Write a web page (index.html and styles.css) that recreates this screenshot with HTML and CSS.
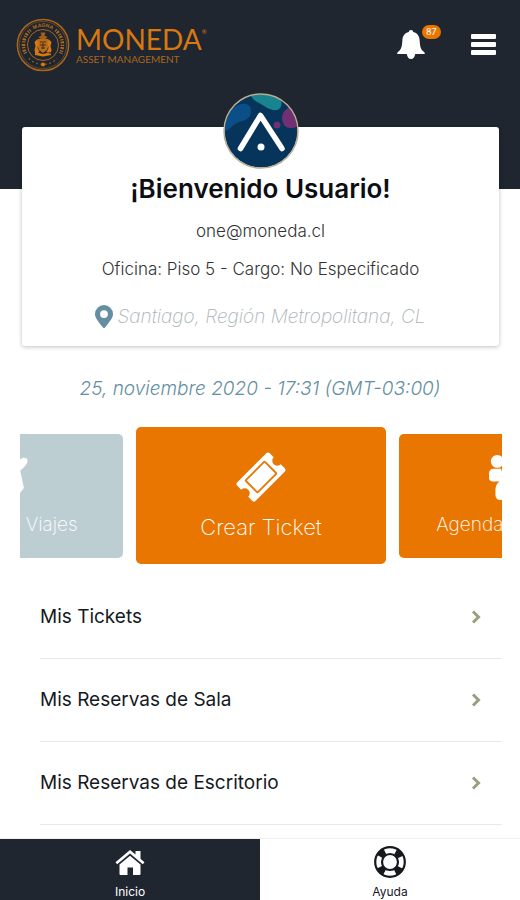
FILE: index.html
```html
<!DOCTYPE html>
<html lang="es">
<head>
<meta charset="utf-8">
<meta name="viewport" content="width=device-width, initial-scale=1">
<title>Moneda Asset Management</title>
<link rel="stylesheet" href="styles.css">
</head>
<body>
<div class="app">
  <header class="header">
    <div class="topbar">
      <a class="brand" href="#">
        <svg class="seal" viewBox="0 0 54 54" aria-hidden="true">
          <g fill="none" stroke="currentColor">
            <circle cx="27" cy="27" r="25.6" stroke-width="1.5"/>
            <circle cx="27" cy="27" r="23.6" stroke-width=".5"/>
            <circle cx="27" cy="27" r="15.500" stroke-width="1"/>
            <path d="M9.500 35.500A19.500 19.500 0 0 1 14.500 12" stroke-width="3.500" stroke-dasharray="1.200 1 2 1.400"/>
            <path d="M39.500 12A19.500 19.500 0 0 1 44.500 35.500" stroke-width="3.500" stroke-dasharray="1.200 1 2 1.400"/>
            <path d="M13 40.500A19.500 19.500 0 0 0 41 40.500" stroke-width="1.400" stroke-dasharray="1.400 3"/>
          </g>
          <path id="arc" d="M9 27A18 18 0 0 1 45 27" fill="none"/>
          <text class="seal-text"><textPath href="#arc" startOffset="50%" text-anchor="middle">MAGNA</textPath></text>
          <g fill="#d9780f">
            <path d="M24.500 14.500h5l-1 3 3 1.500-2 2h-5l-2-2 3-1.500z" opacity=".7"/>
            <path d="M22 21h10l1 5-2 6-4 3-4-3-2-6z" opacity=".85"/>
            <path d="M18.500 24l3-3 1 4-1 5 2 4-4 2-1-4 1-4zM35.500 24l-3-3-1 4 1 5-2 4 4 2 1-4-1-4zM19 34l8 2 8-2v3l-8 1.500L19 37z"/>
            <circle cx="27" cy="46.500" r="2"/>
          </g>
          <path d="M24 24h2M28 24h2M24 27h6M27 23v8M25 30h4" stroke="#1f262f" stroke-width=".8"/>
        </svg>
        <span class="brand-words">
          <span class="brand-name">MONEDA<sup class="mark">®</sup></span>
          <span class="brand-sub">ASSET MANAGEMENT</span>
        </span>
      </a>
      <div class="actions">
        <button class="icon-button bell" type="button" aria-label="Notificaciones">
          <svg viewBox="0 0 28 30" width="28" height="30" aria-hidden="true"><path fill="currentColor" d="M14 0c1.300 0 2.200.9 2.200 2.100C20.500 3 22.500 6.200 22.700 11c.3 6.200 1.500 9 4.100 10.800.8.600 1 1.200 1 2.200H18.200c-.4 3-2 5-4.200 5s-3.800-2-4.200-5H.2c0-1 .2-1.600 1-2.200C3.800 20 5 17.200 5.300 11 5.500 6.200 7.500 3 11.800 2.100 11.800.9 12.700 0 14 0z"/></svg>
          <span class="badge">87</span>
        </button>
        <button class="icon-button" type="button" aria-label="Menú">
          <svg viewBox="0 0 25 22" width="25" height="22" aria-hidden="true"><path fill="currentColor" d="M1 0h23a1 1 0 0 1 1 1v3a1 1 0 0 1-1 1H1a1 1 0 0 1-1-1V1a1 1 0 0 1 1-1zm0 8h23a1 1 0 0 1 1 1v3a1 1 0 0 1-1 1H1a1 1 0 0 1-1-1V9a1 1 0 0 1 1-1zm0 8h23a1 1 0 0 1 1 1v3a1 1 0 0 1-1 1H1a1 1 0 0 1-1-1v-3a1 1 0 0 1 1-1z"/></svg>
        </button>
      </div>
    </div>
  </header>

  <main>
    <section class="profile">
      <svg class="avatar" viewBox="0 0 76 76" role="img" aria-label="Avatar">
        <defs><clipPath id="disc"><circle cx="38" cy="38" r="36.500"/></clipPath></defs>
        <g clip-path="url(#disc)">
          <path fill="#06345a" d="M0 0h76v76H0z"/>
          <path fill="#0b4f88" d="M0 38C6 39 9 31 16 29S28 25 28 18 22 9 15 12L0 22z"/>
          <path fill="#178490" d="M27 0c2 8 8 9 14 13s13 6 16 2 1-8 0-15z"/>
          <path fill="#713074" d="M68 14c-6 2-9 6-9 11s3 10 8 10 9-2 9-2V14z"/>
          <circle cx="54" cy="32" r="3.500" fill="#713074"/>
        </g>
        <circle cx="38" cy="38" r="37" fill="none" stroke="#b9af93" stroke-width="1.500"/>
        <path d="M17.500 55.500L37.500 22.500l21.500 33" fill="none" stroke="#fff" stroke-width="5.500" stroke-linecap="round" stroke-linejoin="round"/>
        <circle cx="38" cy="54" r="3.500" fill="#fff"/>
      </svg>
      <h1 class="welcome">¡Bienvenido Usuario!</h1>
      <p class="detail">one@moneda.cl</p>
      <p class="detail">Oficina: Piso 5 - Cargo: No Especificado</p>
      <p class="location">
        <svg class="pin" viewBox="0 0 18 23" aria-hidden="true"><path fill="currentColor" fill-rule="evenodd" d="M9 0a9 9 0 0 1 9 9c0 3.500-2 6-8 13.500a1.300 1.300 0 0 1-2 0C2 15 0 12.500 0 9a9 9 0 0 1 9-9zm0 5.200a3.900 3.900 0 1 0 0 7.800 3.900 3.900 0 0 0 0-7.800z"/></svg>
        <span class="place">Santiago, Región Metropolitana, CL</span>
      </p>
    </section>

    <p class="date">25, noviembre 2020 - 17:31 (GMT-03:00)</p>

    <section class="carousel" aria-label="Accesos directos">
      <button class="slide muted" type="button">
        <svg class="slide-icon" viewBox="0 0 50 50" aria-hidden="true"><path fill="currentColor" d="M35 6c3-3 8-2 8 1 0 4-3 7-8 11l4 19-4 5-10-15-8 7 1 7-3 3-5-8-8-5 3-3 7 1 7-8L4 11l4-4 19 6z"/></svg>
        <span>Reservar Viajes</span>
      </button>
      <button class="slide active" type="button">
        <svg class="slide-icon" viewBox="0 0 50 50" aria-hidden="true">
          <g transform="rotate(-45 25 25)">
            <path fill="currentColor" d="M4.500 12h41a2.500 2.500 0 0 1 2.500 2.500V20a5 5 0 0 0 0 10v5.500a2.500 2.500 0 0 1-2.500 2.500h-41A2.500 2.500 0 0 1 2 35.500V30a5 5 0 0 0 0-10v-5.500A2.500 2.500 0 0 1 4.500 12z"/>
            <rect x="11.500" y="16.500" width="27" height="17" rx="1" fill="none" stroke="#e97600" stroke-width="1.800"/>
          </g>
        </svg>
        <span>Crear Ticket</span>
      </button>
      <button class="slide" type="button">
        <svg class="slide-icon" viewBox="0 0 50 50" aria-hidden="true"><g fill="currentColor"><circle cx="9" cy="8" r="7"/><circle cx="41" cy="8" r="7"/><circle cx="25" cy="16" r="9"/><path d="M5 16h8c1.500 5 3 8 6 10-3 3-6 4-9 4H5c-4 0-5-2-5-5v-4c0-3 2-5 5-5zM45 16h-8c-1.500 5-3 8-6 10 3 3 6 4 9 4h5c4 0 5-2 5-5v-4c0-3-2-5-5-5z"/><path d="M17 28h16c6 0 10 5 10 11v5c0 4-2 6-6 6H13c-4 0-6-2-6-6v-5c0-6 4-11 10-11z"/></g></svg>
        <span>Agendar Reunión</span>
      </button>
    </section>

    <ul class="list">
      <li><a href="#">Mis Tickets<svg class="chevron" viewBox="0 0 10 14" aria-hidden="true"><path d="M2 1.500L7.500 7 2 12.500"/></svg></a></li>
      <li><a href="#">Mis Reservas de Sala<svg class="chevron" viewBox="0 0 10 14" aria-hidden="true"><path d="M2 1.500L7.500 7 2 12.500"/></svg></a></li>
      <li><a href="#">Mis Reservas de Escritorio<svg class="chevron" viewBox="0 0 10 14" aria-hidden="true"><path d="M2 1.500L7.500 7 2 12.500"/></svg></a></li>
    </ul>
  </main>

  <nav class="tabs">
    <a class="tab current" href="#">
      <svg viewBox="0 0 32 32" aria-hidden="true"><path fill="currentColor" d="M16 4l5.500 4.600V5h5v7.800l4 3.500-1.700 2L16 7.600 3.200 18.300l-1.700-2zM16 9.800l10.500 8.700V28a1 1 0 0 1-1 1H19v-7.500h-5.500V29H6.500a1 1 0 0 1-1-1v-9.500z"/></svg>
      <span>Inicio</span>
    </a>
    <a class="tab" href="#">
      <svg viewBox="0 0 32 32" aria-hidden="true">
        <circle cx="16" cy="16" r="14.800" fill="none" stroke="currentColor" stroke-width="2.200"/>
        <circle cx="16" cy="16" r="8" fill="none" stroke="currentColor" stroke-width="2.200"/>
        <circle cx="16" cy="16" r="11.500" fill="none" stroke="currentColor" stroke-width="6" stroke-dasharray="7 11.060" stroke-dashoffset="-5.530"/>
      </svg>
      <span>Ayuda</span>
    </a>
  </nav>
</div>
</body>
</html>
```
FILE: styles.css
```css
* {
  box-sizing: border-box;
}

body {
  margin: 0;
  background: #fff;
  color: #15191e;
  font-family: Inter, "Liberation Sans", sans-serif;
}

button {
  border: 0;
  margin: 0;
  padding: 0;
  font: inherit;
  color: inherit;
  background: none;
}

a {
  color: inherit;
  text-decoration: none;
}

.app {
  min-height: 100vh;
  display: flex;
  flex-direction: column;
}

.header {
  padding: 18px 24px 117px 16px;
  background: #1f262f;
}

.topbar {
  display: flex;
  justify-content: space-between;
  align-items: center;
}

.brand {
  display: flex;
  align-items: center;
  gap: 6px;
  color: #d9780f;
}

.seal {
  width: 54px;
  height: 54px;
  color: #a8661f;
}

.seal-text {
  font-size: 5px;
  font-weight: 700;
  fill: currentColor;
}

.brand-words {
  display: flex;
  flex-direction: column;
  font-family: Lato, sans-serif;
}

.brand-name {
  display: flex;
  font-size: 28px;
  line-height: 28px;
}

.mark {
  padding-top: 4px;
  font-size: 6px;
  line-height: 6px;
}

.brand-sub {
  font-size: 10px;
  line-height: 12px;
  color: #a8661f;
}

.actions {
  display: flex;
  align-items: center;
  gap: 46px;
  color: #fff;
}

.icon-button {
  position: relative;
  display: block;
}

.icon-button svg {
  display: block;
}

.badge {
  position: absolute;
  left: 25px;
  top: -5px;
  padding: 0 4px;
  border-radius: 8px;
  background: #e97600;
  color: #fff;
  font-size: 9px;
  font-weight: 400;
  line-height: 14px;
}

.profile {
  display: flex;
  flex-direction: column;
  align-items: center;
  margin: -62px 21px 0 22px;
  padding-bottom: 18px;
  border-radius: 3px;
  background: #fff;
  box-shadow: 0 1px 4px rgba(0, 0, 0, 0.25);
  text-align: center;
}

.avatar {
  width: 76px;
  height: 76px;
  margin-top: -34px;
}

.welcome {
  margin: 4px 0 14px;
  font-size: 26px;
  font-weight: 600;
  line-height: 32px;
  color: #0c0f12;
}

.detail {
  margin: 0 0 14px;
  font-size: 17px;
  font-weight: 300;
  line-height: 24px;
  color: #333;
}

.location {
  display: flex;
  align-items: center;
  gap: 4px;
  margin: 10px 0 0;
  color: #648ea1;
}

.pin {
  width: 18px;
  height: 23px;
}

.place {
  overflow: hidden;
  font-size: 19px;
  font-style: italic;
  font-weight: 200;
  line-height: 20px;
  color: #a9b3b8;
}

.date {
  margin: 30px 0 25px;
  font-size: 19px;
  font-style: italic;
  font-weight: 300;
  line-height: 26px;
  text-align: center;
  color: #648ea1;
}

.carousel {
  display: flex;
  justify-content: center;
  align-items: center;
  gap: 13px;
  margin: 0 18px 0 20px;
  overflow: hidden;
}

.slide {
  flex: none;
  display: flex;
  flex-direction: column;
  align-items: center;
  justify-content: center;
  gap: 12px;
  width: 225px;
  height: 124px;
  border-radius: 5px;
  background: #e97600;
  color: #fff;
  font-size: 19px;
  font-weight: 200;
  line-height: 26px;
}

.slide.muted {
  background: #bdced3;
}

.slide.active {
  width: 250px;
  height: 137px;
  font-size: 22px;
}

.slide-icon {
  width: 46px;
  height: 46px;
}

.active .slide-icon {
  width: 50px;
  height: 50px;
}

.list {
  margin: 12px 18px 0 40px;
  padding: 0;
  list-style: none;
}

.list a {
  display: flex;
  justify-content: space-between;
  align-items: center;
  min-height: 83px;
  padding-right: 21px;
  border-bottom: 1px solid #e8e9ea;
  font-size: 19px;
  line-height: 26px;
}

.chevron {
  width: 10px;
  height: 14px;
  fill: none;
  stroke: #9d9d80;
  stroke-width: 3px;
}

.tabs {
  position: sticky;
  bottom: 0;
  display: flex;
  margin-top: auto;
  background: #fff;
  box-shadow: 0 -1px 1px rgba(0, 0, 0, 0.06);
}

.tab {
  flex: 1;
  display: flex;
  flex-direction: column;
  align-items: center;
  gap: 6px;
  padding-top: 7px;
  font-size: 12px;
  line-height: 16px;
}

.tab svg {
  width: 32px;
  height: 32px;
}

.tab.current {
  background: #1f262f;
  color: #fff;
}
```
